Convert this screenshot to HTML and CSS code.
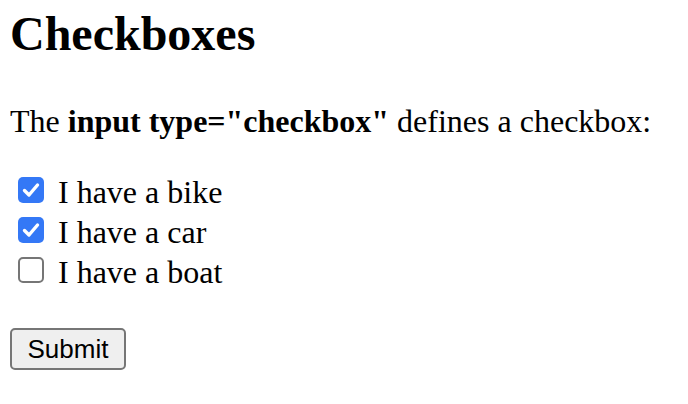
FILE: index.html
```html
<!DOCTYPE html>
<html>
<head>
<meta charset="utf-8">
<link rel="stylesheet" href="styles.css">
</head>
<body>
<h1 class="title">Checkboxes</h1>
<p class="intro">The <b>input type="checkbox"</b> defines a checkbox:</p>
<form class="form">
  <label class="row"><input class="cb" type="checkbox" checked><span>I have a bike</span></label>
  <label class="row"><input class="cb" type="checkbox" checked><span>I have a car</span></label>
  <label class="row"><input class="cb" type="checkbox"><span>I have a boat</span></label>
  <button class="submit" type="button">Submit</button>
</form>
</body>
</html>
```
FILE: styles.css
```css
body {
  margin: 10px;
  font-family: "Liberation Serif", "Times New Roman", serif;
  font-size: 32px;
  color: #000;
  background: #fff;
}
.title {
  font-size: 48px;
  font-weight: bold;
  margin: 0;
  line-height: 48px;
}
.intro {
  margin: 43px 0 0;
  line-height: 40px;
}
.form {
  margin-top: 31px;
  display: flex;
  flex-direction: column;
  align-items: flex-start;
}
.row {
  display: flex;
  align-items: flex-start;
  line-height: 40px;
  height: 40px;
  gap: 14px;
  padding-left: 8px;
}
.cb {
  appearance: none;
  -webkit-appearance: none;
  width: 26px;
  height: 26px;
  margin: 5px 0 0;
  border: 2px solid #767676;
  border-radius: 5px;
  background: #fff;
  box-sizing: border-box;
}
.cb:checked {
  border: none;
  background: #3478f6 url("data:image/svg+xml;utf8,<svg xmlns='http://www.w3.org/2000/svg' viewBox='0 0 26 26'><path d='M6.5 13.5 L11 18 L19.5 8' fill='none' stroke='white' stroke-width='3.4' stroke-linecap='round' stroke-linejoin='round'/></svg>") no-repeat center / 100% 100%;
}
.submit {
  margin-top: 36px;
  font-family: "Liberation Sans", Arial, sans-serif;
  font-size: 26px;
  height: 42px;
  padding: 0 15.5px;
  background: #efefef;
  border: 2px solid #767676;
  border-radius: 5px;
  color: #000;
}
```
